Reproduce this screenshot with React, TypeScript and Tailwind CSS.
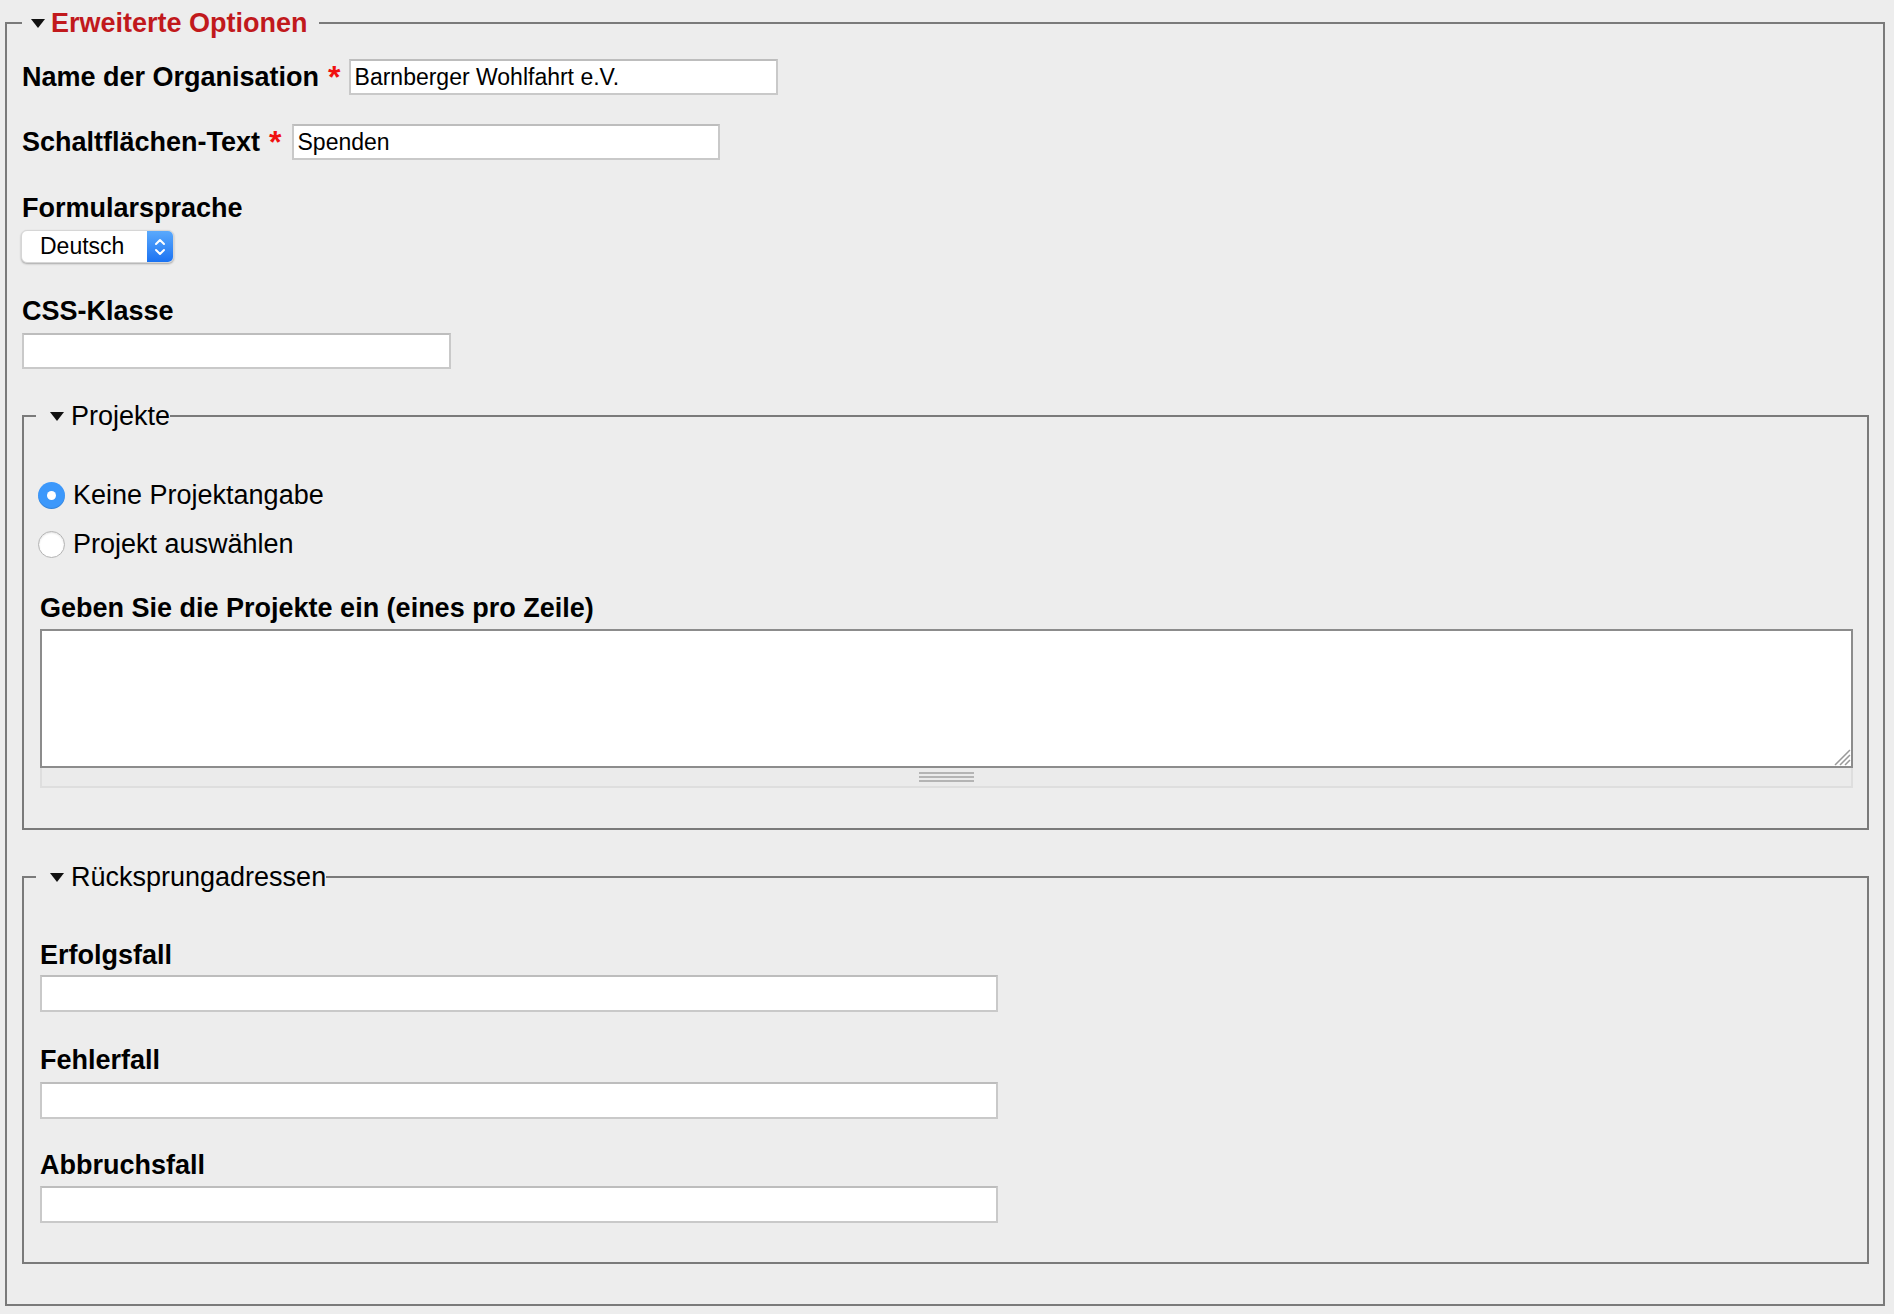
import React from 'react';

const Triangle = () => (
  <svg width="14" height="9" viewBox="0 0 14 9" className="shrink-0">
    <polygon points="0,0 14,0 7,9" fill="#111" />
  </svg>
);

const Required = () => (
  <span className="text-[#f01010] font-bold ml-[9px] text-[32px] leading-[31px]">*</span>
);

const TextInput = ({ value = '', width, height = 'h-[36px]' }: { value?: string; width: string; height?: string }) => (
  <input
    type="text"
    defaultValue={value}
    className={`${width} ${height} bg-white border-2 border-[#c9c9c9] border-t-[#bdbdbd] px-[4px] text-[23px] text-black outline-none`}
  />
);

const Radio = ({ checked, label }: { checked: boolean; label: string }) => (
  <label className="flex items-center h-[30px] -ml-[2px] gap-[8px]">
    {checked ? (
      <span className="w-[27px] h-[27px] rounded-full bg-[#3c98fb] flex items-center justify-center shadow-[inset_0_-1px_1px_rgba(0,0,0,0.15)]">
        <span className="w-[9px] h-[9px] rounded-full bg-white" />
      </span>
    ) : (
      <span className="w-[27px] h-[27px] rounded-full bg-white border border-[#b3b3b3] shadow-[inset_0_1px_2px_rgba(0,0,0,0.12)]" />
    )}
    <span className="text-[27px] leading-[30px] text-black">{label}</span>
  </label>
);

const SubLegend = ({ title }: { title: string }) => (
  <legend className="-ml-[4px] pl-[14px] pr-0">
    <span className="flex items-center gap-[7px] text-[27px] leading-[30px] text-black">
      <Triangle />
      {title}
    </span>
  </legend>
);

export default function App() {
  return (
    <div className="min-h-[1314px] bg-[#ededed] pt-[8px] pl-[5px] pr-[9px] pb-[9px] font-['Liberation_Sans',Arial,sans-serif] text-black">
      <fieldset className="border-2 border-[#7a7a7a] pl-[15px] pr-[14px] pb-[40px]">
        <legend className="ml-0 pl-[9px] pr-[11px]">
          <span className="flex items-center gap-[6px] text-[27px] leading-[30px] font-bold text-[#c1191c]">
            <Triangle />
            Erweiterte Optionen
          </span>
        </legend>

        <div className="mt-[21px] flex items-center">
          <span className="text-[27px] leading-[31px] font-bold">Name der Organisation</span>
          <Required />
          <span className="w-[8px]" />
          <TextInput value="Barnberger Wohlfahrt e.V." width="w-[429px]" />
        </div>

        <div className="mt-[29px] flex items-center">
          <span className="text-[27px] leading-[31px] font-bold">Schaltflächen-Text</span>
          <Required />
          <span className="w-[10px]" />
          <TextInput value="Spenden" width="w-[428px]" />
        </div>

        <div className="mt-[33px] text-[27px] leading-[31px] font-bold">Formularsprache</div>
        <div className="mt-[6px] -ml-[1px] flex w-[153px] h-[33px] rounded-[6px] bg-white shadow-[0_1px_2px_rgba(0,0,0,0.3)] border border-[#d6d6d6]">
          <span className="flex-1 flex items-center pl-[18px] text-[23px] leading-none">Deutsch</span>
          <span className="w-[26px] h-full rounded-r-[5px] bg-gradient-to-b from-[#5aa9fc] to-[#1a72f2] flex items-center justify-center">
            <svg width="12" height="20" viewBox="0 0 12 20">
              <polyline points="2,7 6,3 10,7" fill="none" stroke="white" strokeWidth="2" strokeLinecap="round" strokeLinejoin="round" />
              <polyline points="2,13 6,17 10,13" fill="none" stroke="white" strokeWidth="2" strokeLinecap="round" strokeLinejoin="round" />
            </svg>
          </span>
        </div>

        <div className="mt-[33px] text-[27px] leading-[31px] font-bold">CSS-Klasse</div>
        <div className="mt-[6px]">
          <TextInput width="w-[429px]" />
        </div>

        <fieldset className="mt-[32px] border-2 border-[#7a7a7a] pl-[16px] pr-[14px] pb-[40px]">
          <SubLegend title="Projekte" />
          <div className="mt-[49px]">
            <Radio checked label="Keine Projektangabe" />
          </div>
          <div className="mt-[19px]">
            <Radio checked={false} label="Projekt auswählen" />
          </div>
          <div className="mt-[34px] text-[27px] leading-[30px] font-bold">Geben Sie die Projekte ein (eines pro Zeile)</div>
          <div className="mt-[6px]">
            <div className="relative">
              <textarea className="block w-full h-[139px] bg-white border-2 border-[#8c8c8c] resize-none outline-none" />
              <svg width="20" height="20" viewBox="0 0 20 20" className="absolute right-[2px] bottom-[2px]">
                <line x1="19" y1="4" x2="4" y2="19" stroke="#9a9a9a" strokeWidth="1.5" />
                <line x1="19" y1="9" x2="9" y2="19" stroke="#9a9a9a" strokeWidth="1.5" />
                <line x1="19" y1="14" x2="14" y2="19" stroke="#9a9a9a" strokeWidth="1.5" />
              </svg>
            </div>
            <div className="h-[20px] bg-[#ebebeb] border-x-2 border-b-2 border-[#dedede] flex flex-col items-center justify-center gap-[2px]">
              <span className="w-[55px] h-[2px] bg-[#b4b4b4]" />
              <span className="w-[55px] h-[2px] bg-[#b4b4b4]" />
              <span className="w-[55px] h-[2px] bg-[#b4b4b4]" />
            </div>
          </div>
        </fieldset>

        <fieldset className="mt-[32px] border-2 border-[#7a7a7a] pl-[16px] pr-[14px] pb-[39px]">
          <SubLegend title="Rücksprungadressen" />
          <div className="mt-[48px] text-[27px] leading-[30px] font-bold">Erfolgsfall</div>
          <div className="mt-[5px]">
            <TextInput width="w-[958px]" height="h-[37px]" />
          </div>
          <div className="mt-[33px] text-[27px] leading-[30px] font-bold">Fehlerfall</div>
          <div className="mt-[7px]">
            <TextInput width="w-[958px]" height="h-[37px]" />
          </div>
          <div className="mt-[31px] text-[27px] leading-[30px] font-bold">Abbruchsfall</div>
          <div className="mt-[6px]">
            <TextInput width="w-[958px]" height="h-[37px]" />
          </div>
        </fieldset>
      </fieldset>
    </div>
  );
}
